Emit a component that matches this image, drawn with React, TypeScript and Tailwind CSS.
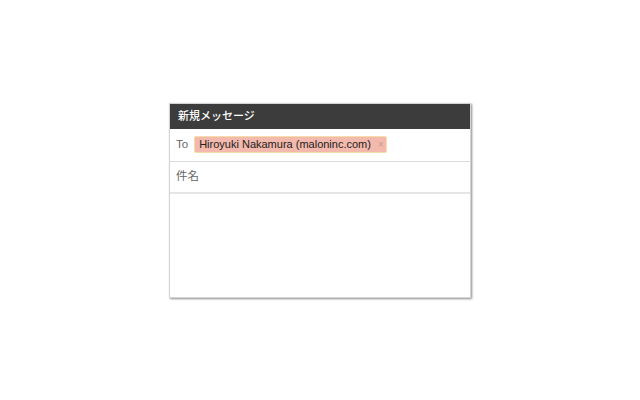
import React from "react";

export default function App() {
  return (
    <div className="w-[640px] h-[400px] bg-white flex items-center justify-center font-['Liberation_Sans','Noto_Sans_CJK_JP',Arial,sans-serif]">
      <div className="w-[302px] h-[195px] flex flex-col bg-white border border-[#d4d4d4] shadow-[1px_1px_2px_rgba(0,0,0,0.45)]">
        <div className="h-[25px] bg-[#3c3c3c] text-white text-[11px] font-medium flex items-center pl-[8px]">新規メッセージ</div>
        <div className="h-[33px] flex items-center px-[5px] border-b border-[#dcdcdc]">
          <span className="text-[11.5px] text-[#666] ml-[1px] mr-[6px]">To</span>
          <span className="h-[17px] flex items-center bg-[#f3b9ac] border border-[#f6dca6] rounded-[2px] pl-[4px] pr-[2px] text-[11px] text-[#222]">
            Hiroyuki Nakamura (maloninc.com)
            <span className="ml-[7px] text-[10px] text-[#c99a90]">×</span>
          </span>
        </div>
        <div className="h-[32px] flex items-center px-[6px] border-b-2 border-[#e6e6e6] text-[11.5px] text-[#666]">件名</div>
        <div className="flex-1" />
      </div>
    </div>
  );
}
